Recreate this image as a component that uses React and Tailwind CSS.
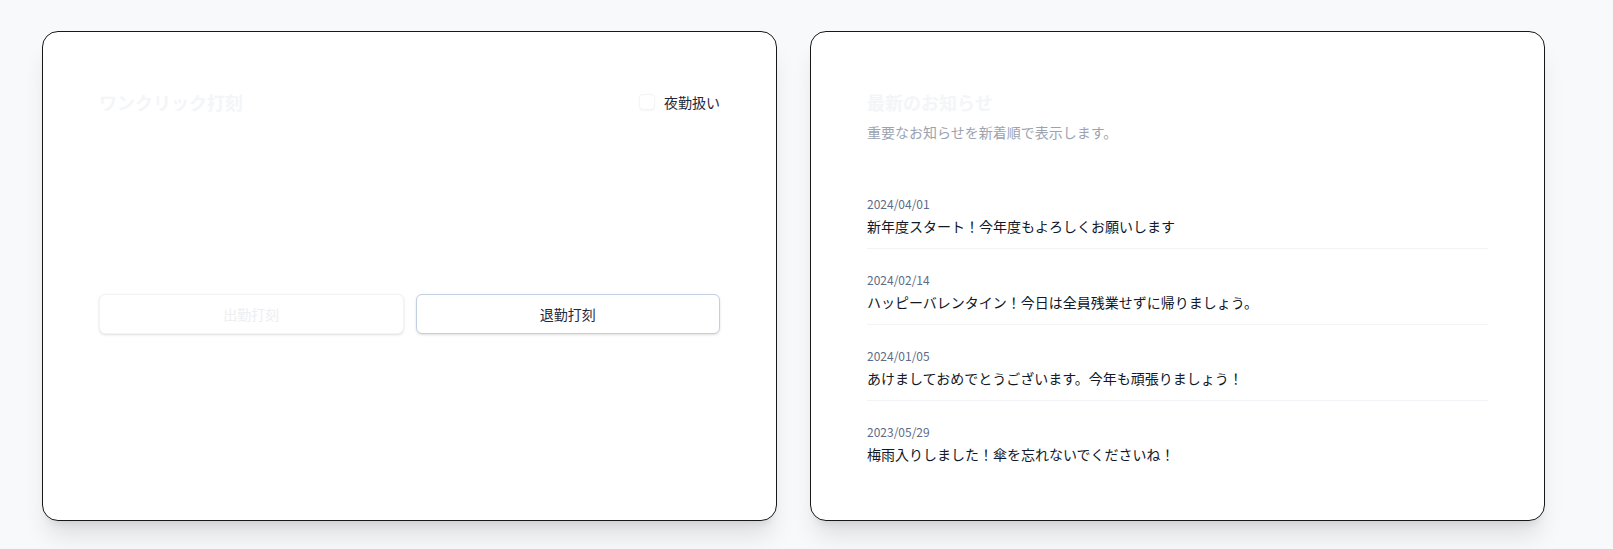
import React from "react";

const news = [
  { date: "2024/04/01", title: "新年度スタート！今年度もよろしくお願いします" },
  { date: "2024/02/14", title: "ハッピーバレンタイン！今日は全員残業せずに帰りましょう。" },
  { date: "2024/01/05", title: "あけましておめでとうございます。今年も頑張りましょう！" },
  { date: "2023/05/29", title: "梅雨入りしました！傘を忘れないでくださいね！" },
];

export default function App() {
  return (
    <div className="min-h-screen bg-[#f8f9fb] font-['Noto_Sans_CJK_JP','Noto_Sans',sans-serif]">
      <div className="flex items-stretch gap-[33px] pl-[42px] pt-[31px]">
        {/* Left card */}
        <div className="w-[735px] rounded-2xl border border-[#18181b] bg-white shadow-xl">
          <div className="p-[56px]">
            <div className="flex h-7 items-center justify-between">
              <h2 className="text-lg font-bold text-[#f4f5f7]">ワンクリック打刻</h2>
              <label className="flex items-center gap-[9px]">
                <span className="h-4 w-4 rounded border border-[#f3f4f6] bg-white shadow-[0_1px_2px_rgba(0,0,0,0.04)]" />
                <span className="text-sm text-[#1e293b]">夜勤扱い</span>
              </label>
            </div>
            <div className="mt-[178px] grid grid-cols-2 gap-3">
              <button
                disabled
                className="h-10 rounded-md border border-[#f1f3f6] bg-white text-sm text-[#eceef1] shadow-sm"
              >
                出勤打刻
              </button>
              <button className="h-10 rounded-md border border-[#c3d0e4] bg-white text-sm text-[#1e293b] shadow-sm">
                退勤打刻
              </button>
            </div>
          </div>
        </div>

        {/* Right card */}
        <div className="w-[735px] rounded-2xl border border-[#18181b] bg-white shadow-xl">
          <div className="p-[56px]">
            <h2 className="text-lg font-bold leading-7 text-[#f4f5f7]">最新のお知らせ</h2>
            <p className="mt-1.5 text-sm leading-5 text-[#9ca3af]">重要なお知らせを新着順で表示します。</p>
            <div className="mt-[54px] flex flex-col gap-[23px]">
              {news.map((n, i) => (
                <div
                  key={n.date}
                  className={i < news.length - 1 ? "border-b border-[#f1f3f6] pb-3" : ""}
                >
                  <div className="text-xs leading-4 text-[#5b6b88]">{n.date}</div>
                  <div className="mt-1 text-sm leading-5 text-[#111827]">{n.title}</div>
                </div>
              ))}
            </div>
          </div>
        </div>
      </div>
    </div>
  );
}
